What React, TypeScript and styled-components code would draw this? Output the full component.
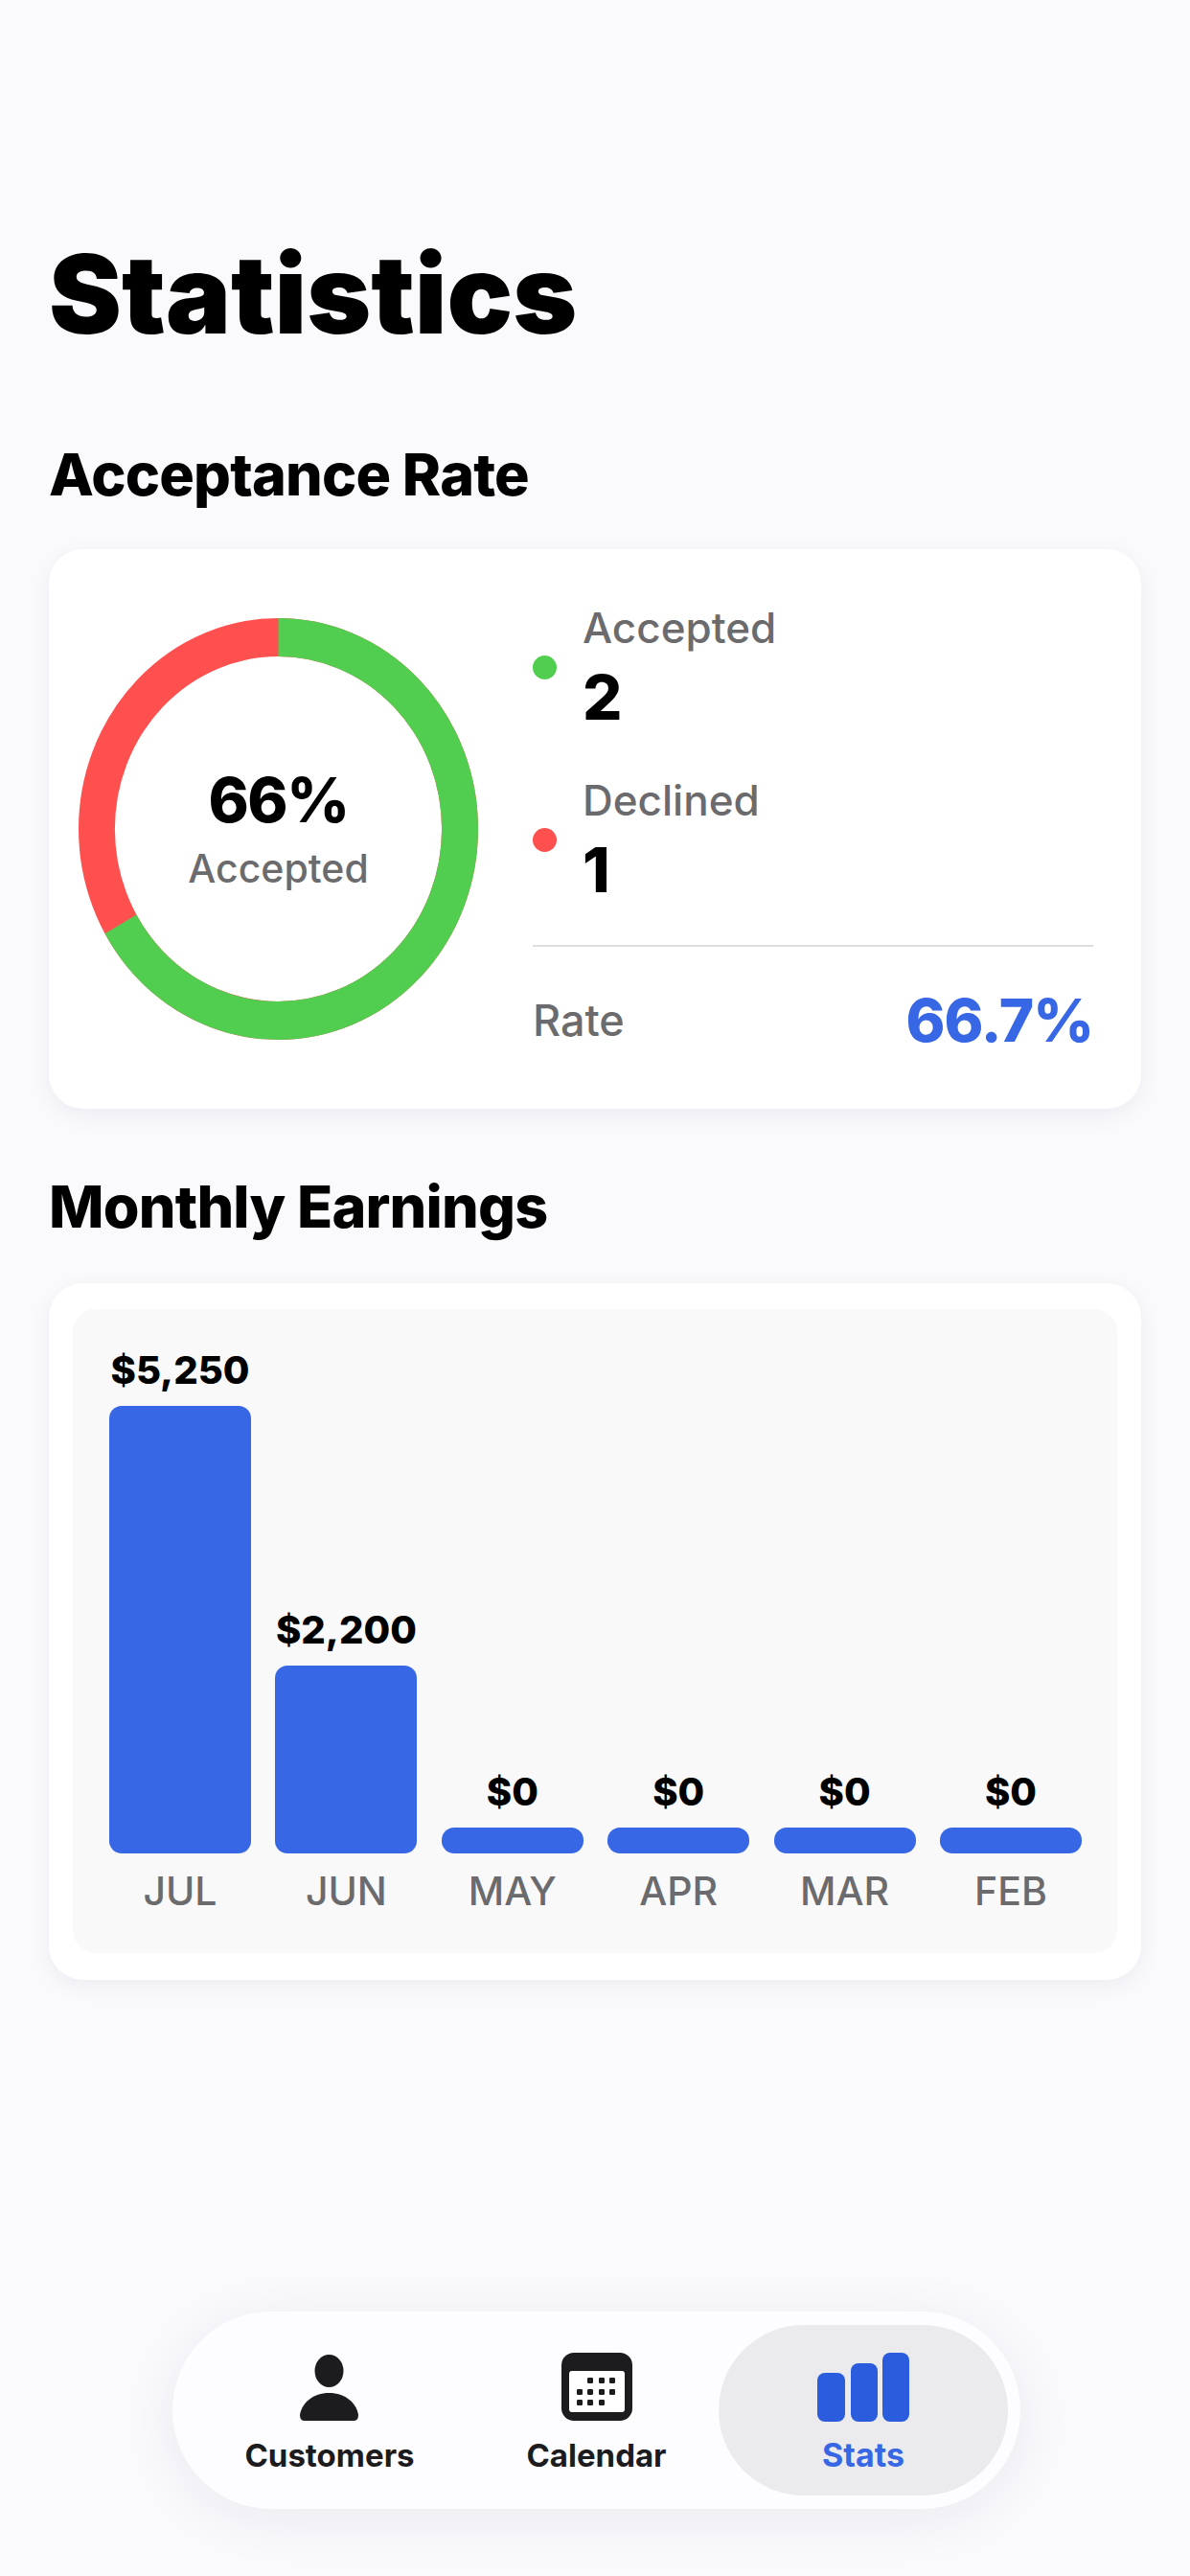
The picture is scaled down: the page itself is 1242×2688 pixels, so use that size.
import styled, { createGlobalStyle } from "styled-components";

const GlobalStyle = createGlobalStyle`
    html, body {
        margin: 0;
        padding: 0;
        background: #fafafd;
    }
    * {
        box-sizing: border-box;
    }
`

const colors = {
    black: "#000000",
    gray: "#6b6b6e",
    green: "#51ce50",
    red: "#ff5050",
    blue: "#3767e4",
    navBlue: "#2b5cde",
    navInk: "#1c1c1e",
}

const Page = styled.div`
    width: 1242px;
    height: 2688px;
    padding: 242px 51px 70px;
    display: flex;
    flex-direction: column;
    font-family: Inter, "Liberation Sans", sans-serif;
    color: ${colors.black};
    overflow: hidden;
`

const Title = styled.h1`
    margin: 0 0 88px;
    font-size: 114px;
    line-height: 130px;
    font-weight: 900;
`

const SectionTitle = styled.h2`
    margin: 0 0 43px;
    font-size: 61px;
    line-height: 70px;
    font-weight: 800;
    letter-spacing: -0.8px;
`

const Card = styled.section`
    width: 1140px;
    background: #ffffff;
    border-radius: 36px;
    box-shadow: 0 6px 24px rgba(20, 20, 50, 0.06);
`

const RateCard = styled(Card)`
    display: flex;
    gap: 57px;
    padding: 59px 50px 58px 31px;
    margin-bottom: 67px;
`

const Donut = styled.div`
    position: relative;
    flex: none;
    width: 417px;
    height: 440px;
    margin-top: 13px;
`

const DonutSvg = styled.svg`
    display: block;
    width: 100%;
    height: 100%;
`

const DonutCenter = styled.div`
    position: absolute;
    inset: 0;
    display: flex;
    flex-direction: column;
    align-items: center;
    padding-top: 150px;
`

const DonutValue = styled.div`
    font-size: 64px;
    line-height: 80px;
    font-weight: 800;
    letter-spacing: -1.5px;
`

const DonutLabel = styled.div`
    margin-top: 1px;
    font-size: 41px;
    line-height: 60px;
    font-weight: 500;
    color: ${colors.gray};
`

const Stats = styled.div`
    flex: 1;
    display: flex;
    flex-direction: column;
`

const Legend = styled.div`
    display: flex;
    flex-direction: column;
    gap: 48px;
    padding-bottom: 42px;
    border-bottom: 2px solid #dedee0;
`

const LegendRow = styled.div`
    display: flex;
    align-items: center;
    gap: 27px;
`

const Dot = styled.span<{ $color: string }>`
    width: 25px;
    height: 25px;
    border-radius: 50%;
    background: ${props => props.$color};
    margin-top: -3px;
`

const LegendLabel = styled.div`
    font-size: 44px;
    line-height: 46px;
    font-weight: 500;
    color: ${colors.gray};
`

const LegendValue = styled.div`
    margin-top: 14px;
    font-size: 65px;
    line-height: 72px;
    font-weight: 800;
`

const RateRow = styled.div`
    display: flex;
    justify-content: space-between;
    align-items: center;
    padding-top: 43px;
`

const RateLabel = styled.div`
    font-size: 45px;
    line-height: 68px;
    font-weight: 500;
    color: ${colors.gray};
`

const RateValue = styled.div`
    font-size: 62px;
    line-height: 68px;
    font-weight: 800;
    letter-spacing: -1px;
    color: ${colors.blue};
`

const EarningsCard = styled(Card)`
    margin-top: 2px;
    padding: 27px 25px 28px;
`

const ChartPanel = styled.div`
    display: grid;
    grid-template-columns: repeat(6, 148px);
    column-gap: 25.4px;
    align-items: end;
    padding: 40px 38px 40px;
    background: #f9f9fa;
    border-radius: 24px;
`

const BarColumn = styled.div`
    display: flex;
    flex-direction: column;
    align-items: center;
`

const BarValue = styled.div`
    margin-bottom: 13px;
    font-size: 40px;
    line-height: 48px;
    font-weight: 800;
    white-space: nowrap;
`

const Bar = styled.div`
    width: 100%;
    background: ${colors.blue};
    border-radius: 13px;
`

const BarMonth = styled.div`
    margin-top: 14px;
    font-size: 41px;
    line-height: 50px;
    font-weight: 500;
    color: ${colors.gray};
`

const Nav = styled.nav`
    align-self: center;
    margin-top: auto;
    margin-left: 3px;
    display: grid;
    grid-template-columns: 302px 255px 302px;
    width: 885px;
    height: 206px;
    padding: 14px 13px;
    background: #fdfdff;
    border-radius: 103px;
    box-shadow: 0 10px 60px rgba(20, 20, 50, 0.07);
`

const NavItem = styled.div<{ $active?: boolean }>`
    display: flex;
    flex-direction: column;
    align-items: center;
    padding-top: 29px;
    border-radius: 89px;
    background: ${props => props.$active ? "#ebebee" : "transparent"};
    color: ${props => props.$active ? colors.blue : colors.navInk};
`

const NavIcon = styled.svg`
    display: block;
    height: 72px;
`

const NavLabel = styled.div<{ $active?: boolean }>`
    margin-top: 15px;
    font-size: ${props => props.$active ? 34 : 33}px;
    line-height: 40px;
    font-weight: 700;
`

const months = [
    { month: "JUL", amount: 5250 },
    { month: "JUN", amount: 2200 },
    { month: "MAY", amount: 0 },
    { month: "APR", amount: 0 },
    { month: "MAR", amount: 0 },
    { month: "FEB", amount: 0 },
]

const barHeight = (amount: number) => Math.max(27, amount / 5250 * 467)

function RateDonut() {
    const radius = 200
    const circumference = 2 * Math.PI * radius
    const accepted = 0.667 * circumference
    return (
        <Donut>
            <DonutSvg viewBox="0 0 440 440" preserveAspectRatio="none">
                <circle cx="220" cy="220" r={radius} fill="none" stroke={colors.red} strokeWidth="40" />
                <circle
                    cx="220"
                    cy="220"
                    r={radius}
                    fill="none"
                    stroke={colors.green}
                    strokeWidth="40"
                    strokeDasharray={`${accepted} ${circumference}`}
                    transform="rotate(-90 220 220)"
                />
            </DonutSvg>
            <DonutCenter>
                <DonutValue>66%</DonutValue>
                <DonutLabel>Accepted</DonutLabel>
            </DonutCenter>
        </Donut>
    )
}

function PersonIcon() {
    return (
        <NavIcon viewBox="0 0 62 72" width="62" fill={colors.navInk}>
            <ellipse cx="30.5" cy="19" rx="15" ry="17" />
            <path d="M5 71 Q0 71 0 65 C2 52 14 42 30.5 42 C47 42 59 52 61 65 Q61 71 56 71 Z" />
        </NavIcon>
    )
}

function CalendarIcon() {
    const dots = [
        [19, 29], [31, 29], [42, 29],
        [8, 41], [19, 41], [31, 41], [42, 41],
        [8, 52], [19, 52], [31, 52],
    ]
    return (
        <NavIcon viewBox="0 0 74 72" width="74">
            <rect x="0" y="0" width="74" height="71" rx="13" fill={colors.navInk} />
            <rect x="8" y="19" width="58" height="43" rx="3" fill="#ffffff" />
            {dots.map(([x, y]) => (
                <rect key={`${x}-${y}`} x={x + 8} y={y - 3} width="6" height="6" rx="1.2" fill={colors.navInk} />
            ))}
        </NavIcon>
    )
}

function BarsIcon() {
    return (
        <NavIcon viewBox="0 0 96 72" width="96" fill={colors.navBlue}>
            <rect x="0" y="21" width="29" height="51" rx="8" />
            <rect x="35" y="11" width="28" height="61" rx="8" />
            <rect x="68" y="0" width="28" height="72" rx="8" />
        </NavIcon>
    )
}

export default function App() {
    return (
        <Page>
            <GlobalStyle />
            <Title>Statistics</Title>

            <SectionTitle>Acceptance Rate</SectionTitle>
            <RateCard>
                <RateDonut />
                <Stats>
                    <Legend>
                        <LegendRow>
                            <Dot $color={colors.green} />
                            <div>
                                <LegendLabel>Accepted</LegendLabel>
                                <LegendValue>2</LegendValue>
                            </div>
                        </LegendRow>
                        <LegendRow>
                            <Dot $color={colors.red} />
                            <div>
                                <LegendLabel>Declined</LegendLabel>
                                <LegendValue>1</LegendValue>
                            </div>
                        </LegendRow>
                    </Legend>
                    <RateRow>
                        <RateLabel>Rate</RateLabel>
                        <RateValue>66.7%</RateValue>
                    </RateRow>
                </Stats>
            </RateCard>

            <SectionTitle>Monthly Earnings</SectionTitle>
            <EarningsCard>
                <ChartPanel>
                    {months.map(m => (
                        <BarColumn key={m.month}>
                            <BarValue>${m.amount.toLocaleString("en-US")}</BarValue>
                            <Bar style={{ height: barHeight(m.amount) }} />
                            <BarMonth>{m.month}</BarMonth>
                        </BarColumn>
                    ))}
                </ChartPanel>
            </EarningsCard>

            <Nav>
                <NavItem>
                    <PersonIcon />
                    <NavLabel>Customers</NavLabel>
                </NavItem>
                <NavItem>
                    <CalendarIcon />
                    <NavLabel>Calendar</NavLabel>
                </NavItem>
                <NavItem $active>
                    <BarsIcon />
                    <NavLabel $active>Stats</NavLabel>
                </NavItem>
            </Nav>
        </Page>
    )
}
